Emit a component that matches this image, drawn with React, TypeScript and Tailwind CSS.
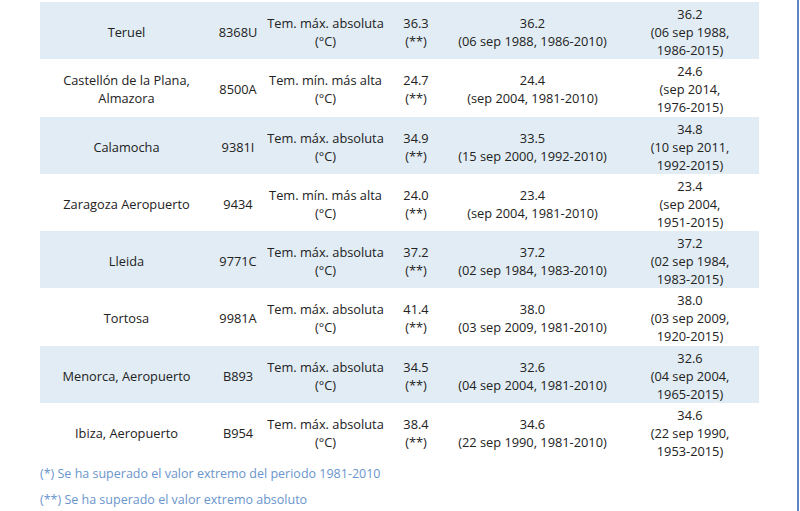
import React from "react";

type Row = {
  name: React.ReactNode;
  code: string;
  var: string;
  val: string;
  p1: string;
  p2a: string;
  p2b: string;
  p2c: string;
};

const rows: Row[] = [
  { name: "Teruel", code: "8368U", var: "Tem. máx. absoluta", val: "36.3", p1: "(06 sep 1988, 1986-2010)", p2a: "36.2", p2b: "(06 sep 1988,", p2c: "1986-2015)", },
  { name: <>Castellón de la Plana,<br />Almazora</>, code: "8500A", var: "Tem. mín. más alta", val: "24.7", p1: "(sep 2004, 1981-2010)", p2a: "24.6", p2b: "(sep 2014,", p2c: "1976-2015)" },
  { name: "Calamocha", code: "9381I", var: "Tem. máx. absoluta", val: "34.9", p1: "(15 sep 2000, 1992-2010)", p2a: "34.8", p2b: "(10 sep 2011,", p2c: "1992-2015)" },
  { name: "Zaragoza Aeropuerto", code: "9434", var: "Tem. mín. más alta", val: "24.0", p1: "(sep 2004, 1981-2010)", p2a: "23.4", p2b: "(sep 2004,", p2c: "1951-2015)" },
  { name: "Lleida", code: "9771C", var: "Tem. máx. absoluta", val: "37.2", p1: "(02 sep 1984, 1983-2010)", p2a: "37.2", p2b: "(02 sep 1984,", p2c: "1983-2015)" },
  { name: "Tortosa", code: "9981A", var: "Tem. máx. absoluta", val: "41.4", p1: "(03 sep 2009, 1981-2010)", p2a: "38.0", p2b: "(03 sep 2009,", p2c: "1920-2015)" },
  { name: "Menorca, Aeropuerto", code: "B893", var: "Tem. máx. absoluta", val: "34.5", p1: "(04 sep 2004, 1981-2010)", p2a: "32.6", p2b: "(04 sep 2004,", p2c: "1965-2015)" },
  { name: "Ibiza, Aeropuerto", code: "B954", var: "Tem. máx. absoluta", val: "38.4", p1: "(22 sep 1990, 1981-2010)", p2a: "34.6", p2b: "(22 sep 1990,", p2c: "1953-2015)" },
];

const p1Vals = ["36.2", "24.4", "33.5", "23.4", "37.2", "38.0", "32.6", "34.6"];

function Cell({ w, children }: { w: string; children: React.ReactNode }) {
  return (
    <div className={`${w} flex items-center justify-center text-center whitespace-nowrap`}>
      <div>{children}</div>
    </div>
  );
}

export default function App() {
  return (
    <div
      className="w-[799px] h-[511px] bg-white border-r-2 border-[#5a85c1] overflow-hidden text-[12.8px] leading-[18px] text-[#222222]"
      style={{ fontFamily: '"Open Sans", "Noto Sans", sans-serif' }}
    >
      <div className="pl-[40px] pt-[2px]">
        <div className="w-[719px] flex flex-col">
          {rows.map((r, i) => (
            <div
              key={i}
              className={`flex h-[57.25px] pt-[3px] ${i % 2 === 0 ? "bg-[#e1ecf4]" : "bg-white"}`}
            >
              <Cell w="w-[173px]">{r.name}</Cell>
              <Cell w="w-[50px]">{r.code}</Cell>
              <Cell w="w-[125px]">
                {r.var}
                <br />
                (°C)
              </Cell>
              <Cell w="w-[56px]">
                {r.val}
                <br />
                (**)
              </Cell>
              <Cell w="w-[177px]">
                {p1Vals[i]}
                <br />
                {r.p1}
              </Cell>
              <Cell w="w-[138px]">
                {r.p2a}
                <br />
                {r.p2b}
                <br />
                {r.p2c}
              </Cell>
            </div>
          ))}
        </div>
        <div className="text-[#6a95cc] text-[12.5px] leading-[26px] mt-[1px]">
          <p>(*) Se ha superado el valor extremo del periodo 1981-2010</p>
          <p>(**) Se ha superado el valor extremo absoluto</p>
        </div>
      </div>
    </div>
  );
}
